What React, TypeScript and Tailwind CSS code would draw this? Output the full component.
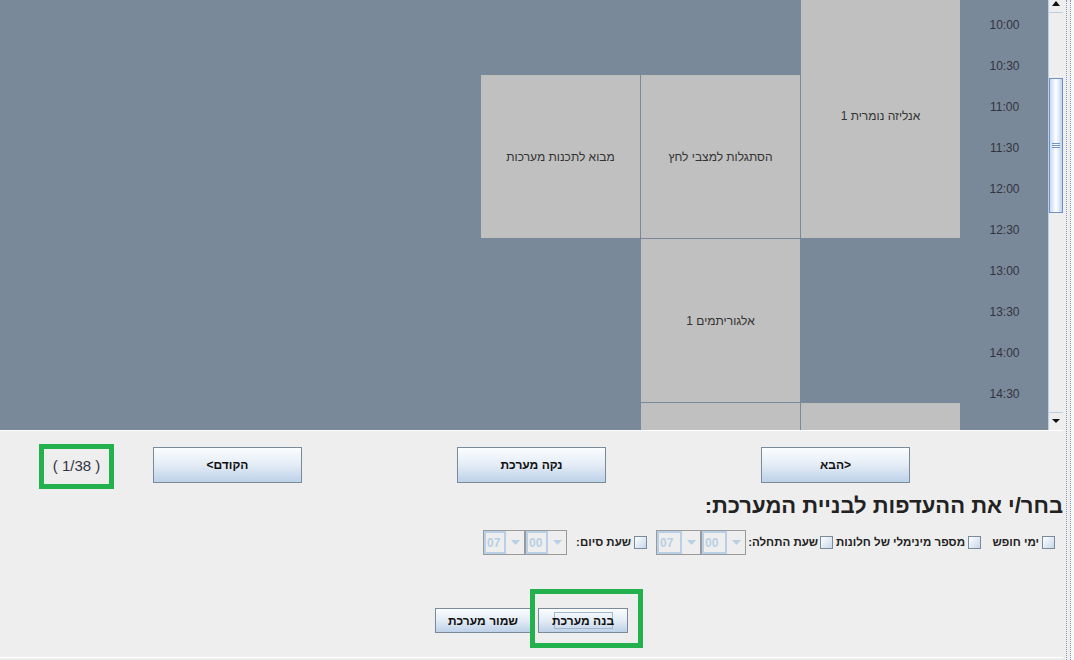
import React from "react";

const F = "font-['Liberation_Sans','DejaVu_Sans',Arial,sans-serif]";

function Btn({ label, w, focus }: { label: string; w: string; focus?: boolean }) {
  return (
    <div
      dir="rtl"
      className={`${w} h-full flex items-center justify-center border border-[#7a8a99] bg-linear-to-b from-[#fbfdff] via-[#e4ecf6] to-[#bdd1e8] text-[12px] font-bold text-[#111] whitespace-nowrap`}
    >
      {focus ? (
        <span className="border border-[#a3b8cc] h-[17px] w-[59px] flex items-center justify-center">{label}</span>
      ) : (
        label
      )}
    </div>
  );
}

function Check() {
  return <div className="w-[13px] h-[13px] shrink-0 border border-[#7a8a99] bg-linear-to-br from-white to-[#c6d7ea]" />;
}

function Combo({ v, w, fw }: { v: string; w: string; fw: string }) {
  return (
    <div dir="ltr" className={`${w} h-[25px] shrink-0 flex border border-[#9a9a9a] bg-[#eeeeee]`}>
      <div className={`${fw} h-full border-2 border-[#b8cfe5] flex items-center pl-[1px] text-[12px] text-[#b8cfe5]`}>{v}</div>
      <div className="flex-1 flex items-center justify-center">
        <svg width="9" height="5" viewBox="0 0 9 5">
          <path d="M0 0 L9 0 L4.5 5 Z" fill="#b8cfe5" />
        </svg>
      </div>
    </div>
  );
}

function Scrollbar() {
  return (
    <div className="w-[15px] h-full flex flex-col bg-[#eeeeee] border-l border-[#b8cfe5]">
      <div className="h-[13px] flex justify-center pt-[1px] border-b border-[#b8cfe5]">
        <svg width="8" height="5" viewBox="0 0 8 5">
          <path d="M0 5 L8 5 L4 0 Z" fill="#111" />
        </svg>
      </div>
      <div className="h-[65px]" />
      <div className="h-[135px] border border-[#6f8fc5] bg-linear-to-r from-[#c9daf0] via-white to-[#bfd3ec] flex flex-col items-center justify-center gap-px">
        <div className="w-[8px] h-px bg-[#7593c8]" />
        <div className="w-[8px] h-px bg-[#7593c8]" />
        <div className="w-[8px] h-px bg-[#7593c8]" />
      </div>
      <div className="flex-1" />
      <div className="h-[16px] flex items-center justify-center border-t border-[#b8cfe5]">
        <svg width="8" height="4" viewBox="0 0 8 4">
          <path d="M0 0 L8 0 L4 4 Z" fill="#111" />
        </svg>
      </div>
      <div className="h-[2px]" />
    </div>
  );
}

const times: { t: string; cls: string }[] = [
  { t: "10:00", cls: "row-start-1" },
  { t: "10:30", cls: "row-start-2" },
  { t: "11:00", cls: "row-start-3" },
  { t: "11:30", cls: "row-start-4" },
  { t: "12:00", cls: "row-start-5" },
  { t: "12:30", cls: "row-start-6" },
  { t: "13:00", cls: "row-start-7" },
  { t: "13:30", cls: "row-start-8" },
  { t: "14:00", cls: "row-start-9" },
  { t: "14:30", cls: "row-start-10" },
];

const blocks: { t: string; cls: string }[] = [
  { t: "אנליזה נומרית 1", cls: "col-start-6 row-start-1 row-span-6" },
  { t: "מבוא לתכנות מערכות", cls: "col-start-4 row-start-3 row-span-4" },
  { t: "הסתגלות למצבי לחץ", cls: "col-start-5 row-start-3 row-span-4" },
  { t: "אלגוריתמים 1", cls: "col-start-5 row-start-7 row-span-4" },
  { t: "", cls: "col-start-5 row-start-11 row-span-2" },
  { t: "", cls: "col-start-6 row-start-11 row-span-2" },
];

export default function App() {
  return (
    <div className={`w-[1074px] h-[660px] flex bg-[#eeeeee] overflow-hidden ${F}`}>
      <div className="w-[1063px] h-full flex flex-col">
        <div className="h-[430px] flex">
          <div className="w-[1048px] h-full overflow-hidden bg-[#7a8999]">
            <div className="mt-[-7px] pl-px grid grid-cols-[repeat(6,159px)_87px] grid-rows-[repeat(12,40px)] gap-px">
              {blocks.map((b, i) => (
                <div
                  key={i}
                  dir="rtl"
                  className={`${b.cls} bg-[#c0c0c0] flex items-center justify-center text-[12px] text-[#333]`}
                >
                  {b.t}
                </div>
              ))}
              {times.map((t) => (
                <div
                  key={t.t}
                  className={`${t.cls} col-start-7 flex items-end justify-center pb-[1px] text-[12px] leading-[14px] text-[#333340]`}
                >
                  {t.t}
                </div>
              ))}
            </div>
          </div>
          <Scrollbar />
        </div>
        <div className="h-px bg-white" />
        <div className="flex-1 flex flex-col">
          <div className="mt-[13px] h-[45px] flex items-start">
            <div className="ml-[39px] w-[75px] h-[45px] border-[5px] border-[#22b14c] flex items-center justify-center text-[15px] text-[#333340] whitespace-pre">
              ( 1/38 )
            </div>
            <div className="ml-[39px] mt-[3px] h-[36px] flex">
              <Btn w="w-[149px]" label="הקודם>" />
            </div>
            <div className="ml-[155px] mt-[3px] h-[36px] flex">
              <Btn w="w-[149px]" label="נקה מערכת" />
            </div>
            <div className="ml-[155px] mt-[3px] h-[36px] flex">
              <Btn w="w-[149px]" label="<הבא" />
            </div>
          </div>
          <div dir="rtl" className="mt-[5px] h-[23px] text-[22px] leading-[23px] font-bold text-[#222] whitespace-nowrap">
            בחר/י את ההעדפות לבניית המערכת:
          </div>
          <div dir="rtl" className="mt-[13px] h-[25px] flex items-center pr-[8px] text-[11.5px] font-bold text-[#222] whitespace-nowrap">
            <Check />
            <span className="w-[61px] pr-[3px] shrink-0">ימי חופש</span>
            <Check />
            <span className="w-[135px] pr-[3px] shrink-0">מספר מינימלי של חלונות</span>
            <Check />
            <span className="w-[74px] pr-[2px] shrink-0">שעת התחלה:</span>
            <Combo v="00" w="w-[45px]" fw="w-[25px]" />
            <Combo v="07" w="w-[45px]" fw="w-[25px]" />
            <div className="w-[9px] shrink-0" />
            <Check />
            <span className="w-[67px] pr-[3px] shrink-0">שעת סיום:</span>
            <Combo v="00" w="w-[42px]" fw="w-[22px]" />
            <Combo v="07" w="w-[42px]" fw="w-[22px]" />
          </div>
          <div className="mt-[53px] h-[25px] flex pl-[435px]">
            <Btn w="w-[96px]" label="שמור מערכת" />
            <div className="relative ml-[7px] h-full flex">
              <Btn w="w-[90px]" label="בנה מערכת" focus />
              <div className="absolute left-[-8px] top-[-19px] w-[113px] h-[59px] border-[5px] border-[#22b14c]" />
            </div>
          </div>
          <div className="flex-1" />
          <div className="h-[3px] border-t border-white" />
        </div>
      </div>
      <div className="w-[11px] h-full flex bg-[#eeeeee]">
        <div className="w-[3px]" />
        <div className="w-[5px] h-full border-l border-r border-dotted border-[#8a9cb5]" />
        <div className="flex-1 bg-[#f8f8f8]" />
      </div>
    </div>
  );
}
